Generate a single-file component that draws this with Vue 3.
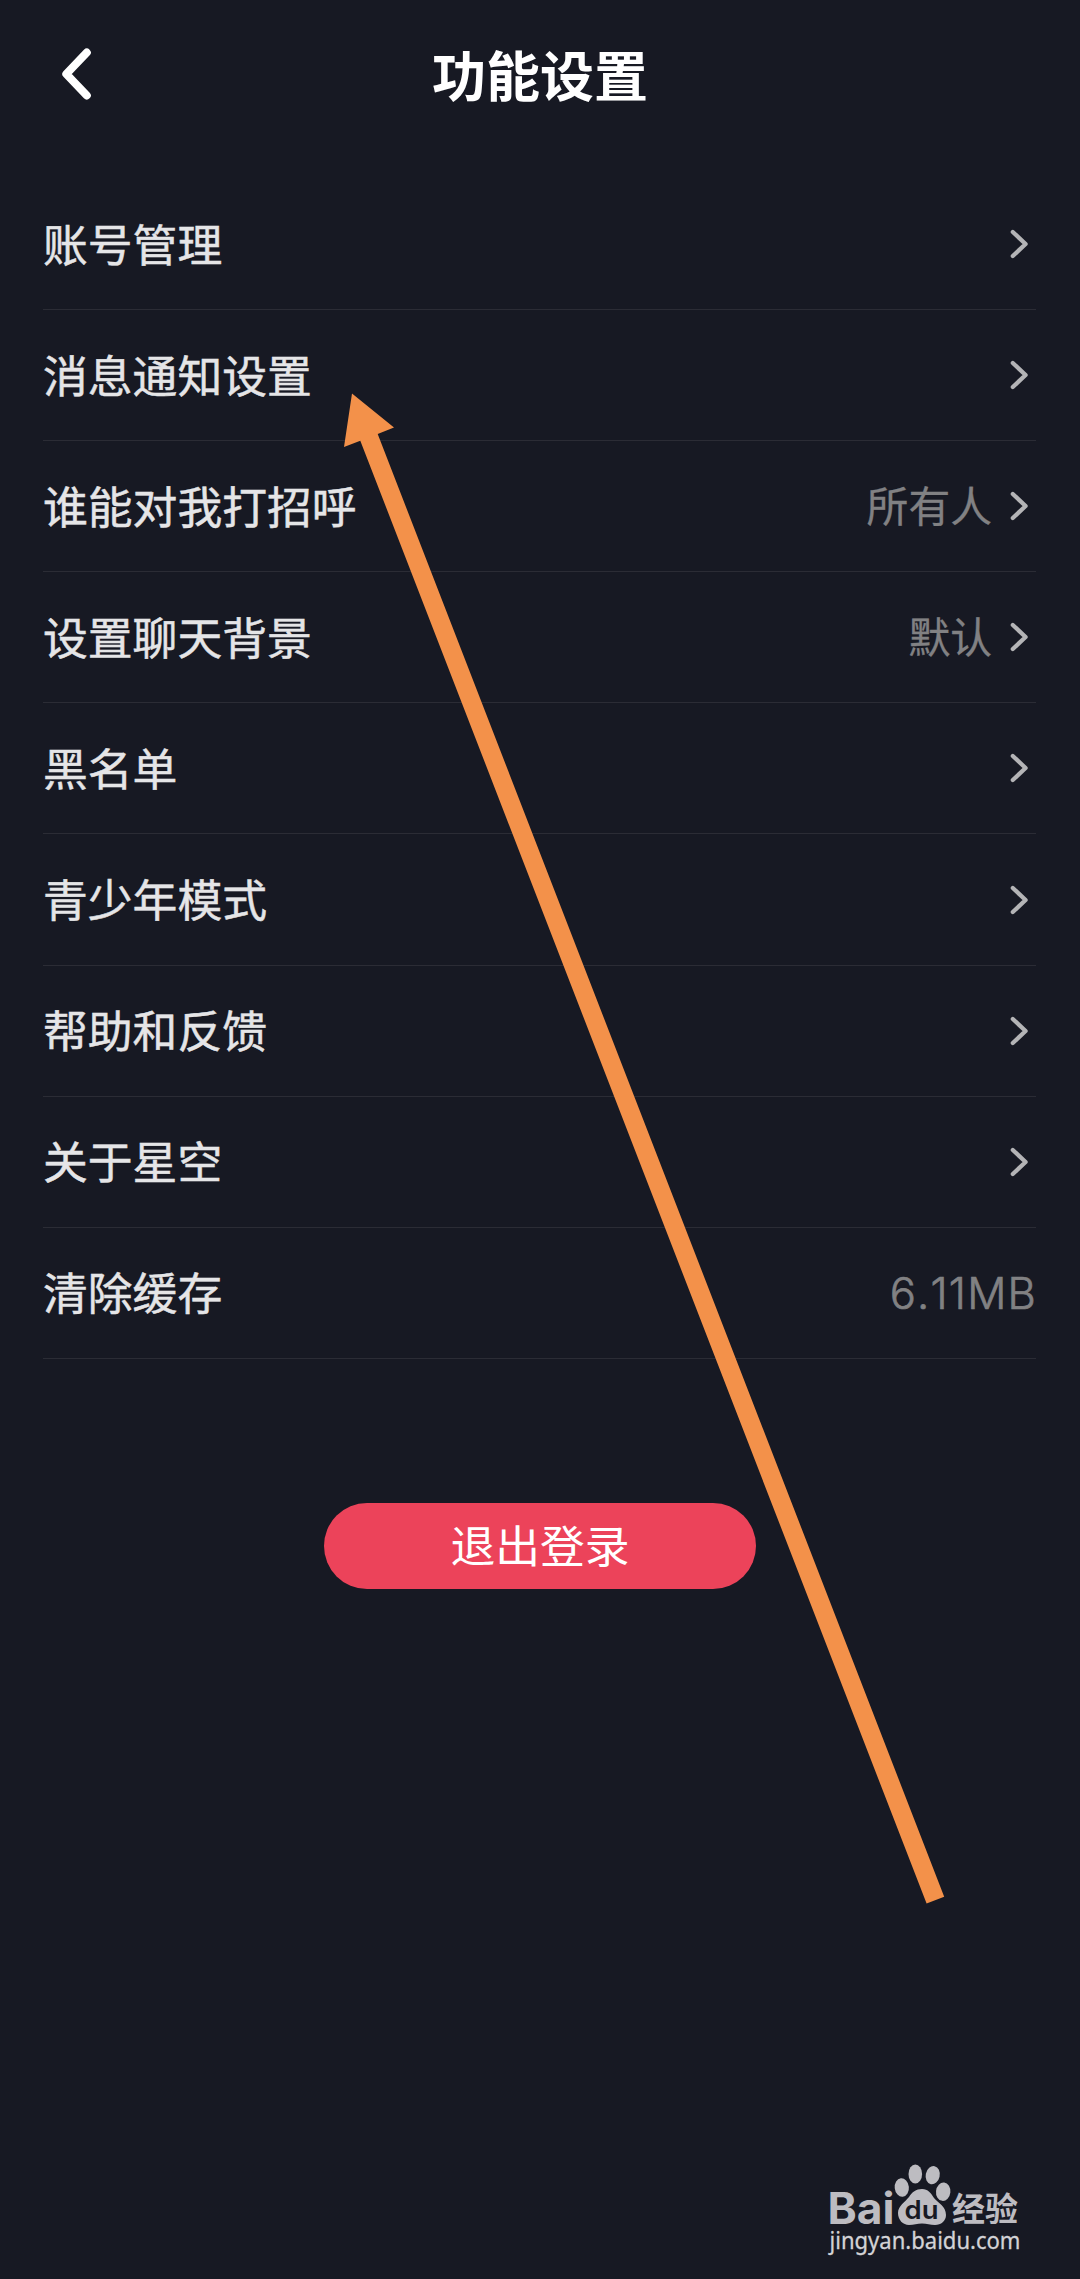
<script setup>
const rows = [
  { label: '账号管理', arrow: true },
  { label: '消息通知设置', arrow: true },
  { label: '谁能对我打招呼', value: '所有人', arrow: true },
  { label: '设置聊天背景', value: '默认', arrow: true },
  { label: '黑名单', arrow: true },
  { label: '青少年模式', arrow: true },
  { label: '帮助和反馈', arrow: true },
  { label: '关于星空', arrow: true },
  { label: '清除缓存', value: '6.11MB', arrow: false },
]
</script>

<template>
  <main class="page">
    <header class="header">
      <svg class="back" width="36" height="56" viewBox="0 0 36 56">
        <path d="M29.8 6.6 L9.3 28 L29.8 49.4" />
      </svg>
      <h1 class="title">功能设置</h1>
    </header>

    <ul class="list">
      <li v-for="row in rows" :key="row.label" class="row">
        <span class="label">{{ row.label }}</span>
        <span v-if="row.value" class="value" :class="{ size: !row.arrow }">{{ row.value }}</span>
        <svg v-if="row.arrow" class="chevron" width="20" height="30" viewBox="0 0 20 30">
          <path d="M2.8 3 L15.6 15 L2.8 27" />
        </svg>
      </li>
    </ul>

    <button class="logout" type="button">退出登录</button>

    <svg class="pointer" width="1080" height="2279" viewBox="0 0 1080 2279">
      <polygon points="352,393.5 394,427.5 377.7,434 944.2,1896.8 926.6,1903.6 360.3,440.7 344,447" />
    </svg>

    <svg class="watermark" width="220" height="119" viewBox="820 2160 220 119">
      <g class="mark">
        <text class="bai" x="827.5" y="2223.5" textLength="67" lengthAdjust="spacingAndGlyphs">Bai</text>
        <ellipse cx="901.8" cy="2187.5" rx="7.1" ry="9.3" transform="rotate(-6 901.8 2187.5)" />
        <ellipse cx="915.3" cy="2174" rx="6.8" ry="9.5" />
        <ellipse cx="932.7" cy="2175.2" rx="7" ry="9.2" transform="rotate(12 932.7 2175.2)" />
        <ellipse cx="943.2" cy="2191.7" rx="7.2" ry="9.2" transform="rotate(6 943.2 2191.7)" />
        <path d="M922 2189 C928 2189 931 2193 934 2198 C938 2203 946 2206 946 2215 C946 2221 941 2225 935 2225 C930 2225 927 2223.5 922 2223.5 C917 2223.5 914 2225 909 2225 C903 2225 898 2220 898 2213 C898 2206 905 2202 909 2197 C912 2192 916 2189 922 2189 Z" />
        <text class="jy" x="952" y="2220.5" textLength="66" lengthAdjust="spacingAndGlyphs">经验</text>
      </g>
      <text class="du" x="904.5" y="2218.5" textLength="34" lengthAdjust="spacingAndGlyphs">du</text>
      <text class="site" x="829.5" y="2249" textLength="191" lengthAdjust="spacingAndGlyphs">jingyan.baidu.com</text>
    </svg>
  </main>
</template>

<style>
body {
  margin: 0;
  background: #171923;
}
</style>

<style scoped>
.page {
  position: relative;
  display: flex;
  flex-direction: column;
  align-items: center;
  box-sizing: border-box;
  width: 1080px;
  height: 2279px;
  overflow: hidden;
  background: #171923;
  font-family: "Noto Sans CJK SC", "Noto Sans", sans-serif;
}

.header {
  display: grid;
  grid-template-columns: 120px 1fr 120px;
  align-items: center;
  width: 100%;
  height: 148px;
  margin-bottom: 31px;
}

.back {
  margin-left: 57px;
}

.back path {
  fill: none;
  stroke: #fff;
  stroke-width: 8;
  stroke-linecap: round;
  stroke-linejoin: round;
}

.title {
  margin: 0;
  padding-bottom: 1px;
  color: #fff;
  font-size: 54px;
  font-weight: 700;
  line-height: 80px;
  text-align: center;
}

.list {
  width: 993px;
  margin: 0 1px 0 0;
  padding: 0;
  list-style: none;
}

.row {
  display: flex;
  align-items: center;
  box-sizing: border-box;
  height: 131.1px;
  border-bottom: 1px solid #2b2c35;
}

.label {
  flex: 1;
  padding-bottom: 3px;
  color: #e5e5e7;
  font-size: 44.8px;
  line-height: 66px;
  -webkit-text-stroke: 0.5px #e5e5e7;
}

.value {
  margin-right: 18px;
  padding-bottom: 4px;
  color: #818183;
  font-size: 41.8px;
  line-height: 62px;
  -webkit-text-stroke: 0.3px #818183;
}

.value.size {
  margin-right: -1px;
  padding-bottom: 0;
  font-family: Inter, sans-serif;
  font-size: 43.5px;
  font-weight: 300;
  font-kerning: none;
  letter-spacing: 1.2px;
  -webkit-text-stroke: 0.7px #818183;
}

.chevron {
  margin-right: 6px;
}

.chevron path {
  fill: none;
  stroke: #b4b4b6;
  stroke-width: 4.2;
  stroke-linecap: round;
  stroke-linejoin: round;
}

.logout {
  width: 432px;
  height: 86px;
  margin-top: 144.2px;
  padding: 0 0 4px;
  border: 0;
  border-radius: 43px;
  background: #ec435a;
  color: #fff;
  font-family: inherit;
  font-size: 44.8px;
  line-height: 82px;
}

.pointer {
  position: absolute;
  top: 0;
  left: 0;
  fill: #f3914a;
  pointer-events: none;
}

.watermark {
  position: absolute;
  right: 40px;
  bottom: 0;
  overflow: visible;
}

.mark {
  fill: #bdbcc1;
}

.bai {
  font: 700 43.5px Inter, sans-serif;
}

.jy {
  font: 700 33px "Noto Sans CJK SC", sans-serif;
}

.du {
  fill: #171923;
  font: 600 25px Inter, sans-serif;
}

.site {
  fill: #d3d3d6;
  stroke: #d3d3d6;
  stroke-width: 0.3px;
  font: 400 24px "Noto Sans", sans-serif;
}
</style>
